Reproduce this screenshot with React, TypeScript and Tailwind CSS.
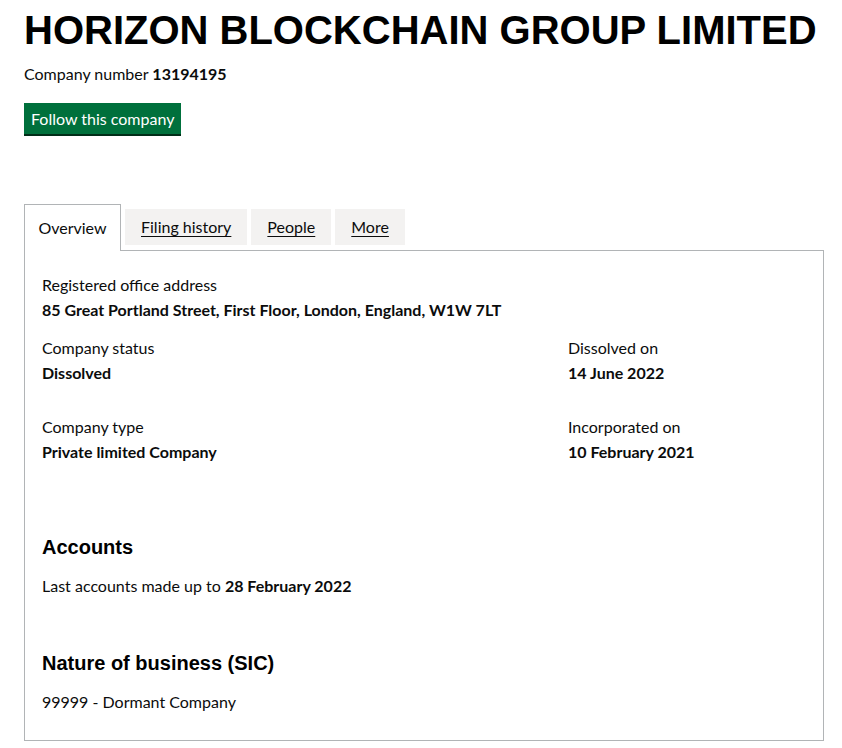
import React from "react";

const body = { fontFamily: 'Lato, "Liberation Sans", Arial, sans-serif' };
const head = { fontFamily: '"Liberation Sans", Arial, sans-serif' };

function Field({ label, value }: { label: string; value: string }) {
  return (
    <div>
      <div className="text-[16px] leading-[25px] text-[#0b0c0c]">{label}</div>
      <div className="text-[16px] leading-[25px] font-bold text-[#0b0c0c]">{value}</div>
    </div>
  );
}

export default function App() {
  return (
    <div className="bg-white min-h-[748px] px-[24px] pt-[7px] text-[#0b0c0c]" style={body}>
      <h1 className="text-[40px] leading-[46px] font-bold text-black whitespace-nowrap" style={head}>
        HORIZON BLOCKCHAIN GROUP LIMITED
      </h1>
      <p className="mt-[11px] text-[16px] leading-[20px]">
        Company number <strong className="font-bold">13194195</strong>
      </p>
      <div className="mt-[19px]">
        <button className="bg-[#00703c] text-white text-[16px] leading-[19px] px-[7px] pt-[6px] pb-[6px] shadow-[0_2px_0_#002d18]">
          Follow this company
        </button>
      </div>
      <div className="mt-[70px]">
        <div className="flex items-end gap-[4px]">
          <div className="bg-white border border-[#b1b4b6] border-b-0 h-[47px] -mb-px relative z-10 flex items-center text-[16px] w-[97px] justify-center">
            Overview
          </div>
          {["Filing history", "People", "More"].map((t) => (
            <div key={t} className="bg-[#f3f2f1] h-[36px] mb-[5px] px-[16px] flex items-center text-[16px] underline underline-offset-[3px]">
              {t}
            </div>
          ))}
        </div>
        <div className="border border-[#b1b4b6] w-[800px] h-[491px] px-[17px] pt-[21px]">
          <Field label="Registered office address" value="85 Great Portland Street, First Floor, London, England, W1W 7LT" />
          <div className="grid grid-cols-[526px_1fr] mt-[13px] gap-y-[29px]">
            <Field label="Company status" value="Dissolved" />
            <Field label="Dissolved on" value="14 June 2022" />
            <Field label="Company type" value="Private limited Company" />
            <Field label="Incorporated on" value="10 February 2021" />
          </div>
          <h2 className="mt-[71px] text-[20px] leading-[25px] font-bold text-black" style={head}>Accounts</h2>
          <p className="mt-[13px] text-[16px] leading-[25px]">
            Last accounts made up to <strong>28 February 2022</strong>
          </p>
          <h2 className="mt-[53px] text-[20px] leading-[25px] font-bold text-black" style={head}>Nature of business (SIC)</h2>
          <p className="mt-[13px] text-[16px] leading-[25px]">99999 - Dormant Company</p>
        </div>
      </div>
    </div>
  );
}
